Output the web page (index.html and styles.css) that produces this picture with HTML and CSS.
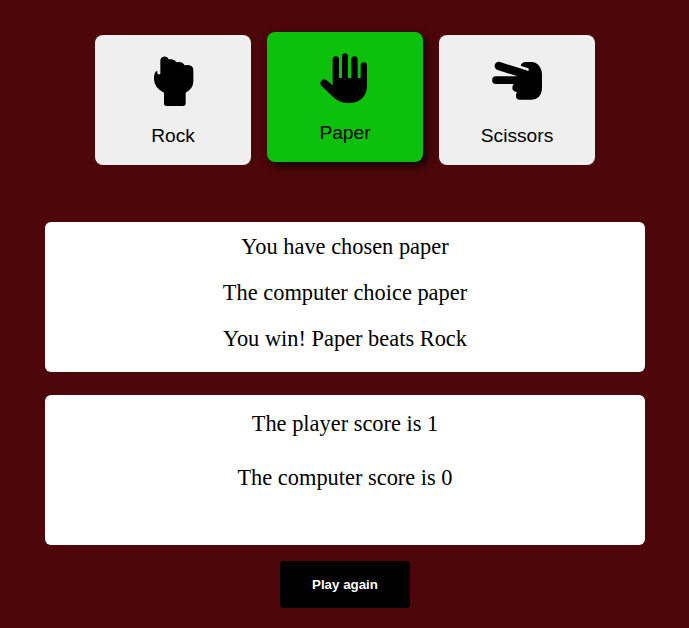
FILE: index.html
```html
<!DOCTYPE html>
<html lang="en">
<head>
<meta charset="utf-8">
<title>Rock Paper Scissors</title>
<link rel="stylesheet" href="styles.css">
</head>
<body>
<main class="game">
  <div class="choices">
    <button class="choice">
      <svg class="icon" viewBox="0 0 150 150"><path d="M37 54V13A13 13 0 0 1 62 10Q77 7 86 19Q101 15 110 28Q123 25 131 31Q136 34 136 42V76Q136 98 113 110V142q0 8-8 8H56q-8 0-8-8V110Q18 95 18 70Q17 48 28 44V52Q30 57 37 54Z"/></svg>
      <span>Rock</span>
    </button>
    <button class="choice selected">
      <svg class="icon" viewBox="0 0 150 150"><path d="M19 81L38 97V19a9.500 9.500 0 0 1 19 0V75H66V9.500a9 9 0 0 1 18 0V75H94V19a9.500 9.500 0 0 1 19 0V75H122V37a9.500 9.500 0 0 1 19 0V98C141 130 119 150 86 150Q60 150 42 134L4 98A11.500 11.500 0 0 1 19 81Z"/></svg>
      <span>Paper</span>
    </button>
    <button class="choice">
      <svg class="icon" viewBox="0 0 150 150"><path d="M24 18L103 43Q108 46 110 43Q112 39 108 37L86 29Q89 18 101 18H119C137 18 150 36 150 55V95C150 118 136 131 117 131H83Q72 131 72 119Q72 112 75 108Q61 106 61 95Q61 89 65 84H12A11.500 11.500 0 0 1 12 61H77L17 42A12 12 0 0 1 24 18Z"/></svg>
      <span>Scissors</span>
    </button>
  </div>
  <section class="panel result">
    <p>You have chosen paper</p>
    <p>The computer choice paper</p>
    <p>You win! Paper beats Rock</p>
  </section>
  <section class="panel score">
    <p>The player score is 1</p>
    <p>The computer score is 0</p>
  </section>
  <button class="again">Play again</button>
</main>
</body>
</html>
```
FILE: styles.css
```css
* { box-sizing: border-box; }
body {
  margin: 0;
  background: #4d0609;
  color: #000;
  font-family: "Liberation Serif", serif;
}
.game {
  display: flex;
  flex-direction: column;
  align-items: center;
  width: 690px;
  padding-top: 35px;
}
.choices { display: flex; gap: 16px; }
.choice {
  display: flex;
  flex-direction: column;
  align-items: center;
  justify-content: flex-start;
  gap: 19px;
  width: 156px;
  height: 130px;
  padding: 21px 0 18px;
  border: 0;
  border-radius: 8px;
  background: #efefef;
  color: #000;
  font: 19.2px/22px "Liberation Sans", sans-serif;
}
.selected {
  background: #0bc10b;
  transform: translateY(-3px);
  box-shadow: 4px 4px 8px rgba(0, 0, 0, .8);
}
.icon { display: block; width: 50px; height: 50px; }
.panel {
  display: flex;
  flex-direction: column;
  align-items: center;
  width: 600px;
  height: 150px;
  border-radius: 6px;
  background: #fff;
  font-size: 22.4px;
  line-height: 26px;
}
.panel p { margin: 0; }
.result { margin-top: 57px; padding-top: 12px; gap: 20px; }
.score { margin-top: 23px; padding-top: 16px; gap: 28px; }
.again {
  width: 130px;
  height: 47px;
  margin-top: 16px;
  padding: 0;
  border: 0;
  border-radius: 4px;
  background: #000;
  color: #fff;
  font: bold 13.333px "Liberation Sans", sans-serif;
}
```
